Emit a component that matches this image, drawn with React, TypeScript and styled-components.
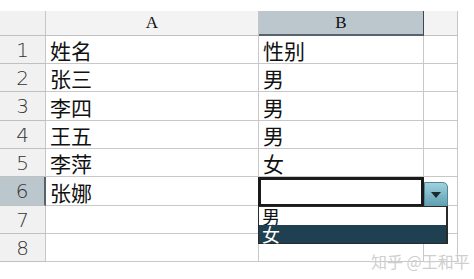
import React from "react";
import styled, {createGlobalStyle} from "styled-components";

const GlobalStyle = createGlobalStyle`
  html, body {
    margin: 0;
    padding: 0;
    background: #ffffff;
  }
  body {
    font-family: "Noto Sans CJK SC", "Noto Sans", sans-serif;
  }
`

const columns = [
    {name: "A", width: 213},
    {name: "B", width: 165},
    {name: "", width: 34},
]

const rows = [
    {n: 1, h: 28, a: "姓名", b: "性别"},
    {n: 2, h: 28, a: "张三", b: "男"},
    {n: 3, h: 29, a: "李四", b: "男"},
    {n: 4, h: 28, a: "王五", b: "男"},
    {n: 5, h: 28, a: "李萍", b: "女"},
    {n: 6, h: 29, a: "张娜", b: ""},
    {n: 7, h: 28, a: "", b: ""},
    {n: 8, h: 28, a: "", b: ""},
]

export default function App() {
    return (
        <Page>
            <GlobalStyle/>
            <Sheet>
                <HeaderRow>
                    <Corner/>
                    {columns.map(c => (
                        <ColHeader key={c.name + c.width} width={c.width} selected={c.name === "B"}>
                            {c.name}
                        </ColHeader>
                    ))}
                </HeaderRow>
                {rows.map(r => (
                    <Row key={r.n} height={r.h}>
                        <RowHeader selected={r.n === 6}>{r.n}</RowHeader>
                        <Cell width={213}>{r.a}</Cell>
                        <Cell width={165}>{r.b}</Cell>
                        <Cell width={34}/>
                    </Row>
                ))}
                <ActiveCell/>
                <DropButton>
                    <svg width="10" height="6" viewBox="0 0 10 6">
                        <path d="M0 0 H10 L5 6 Z" fill="#1d2a30"/>
                    </svg>
                </DropButton>
                <DropList>
                    <ListItem>男</ListItem>
                    <ListItem selected>女</ListItem>
                </DropList>
            </Sheet>
            <Watermark>知乎 @王和平</Watermark>
        </Page>
    );
}

const Page = styled.div`
  position: relative;
  width: 474px;
  height: 279px;
  padding-top: 11px;
  box-sizing: border-box;
  overflow: hidden;
  background: #fff;
`
const Sheet = styled.div`
  position: relative;
  display: flex;
  flex-direction: column;
  width: 458px;
`
const HeaderRow = styled.div`
  display: flex;
  height: 25px;
`
const Corner = styled.div`
  width: 46px;
  box-sizing: border-box;
  background: #f1f1f1;
  border-right: 1px solid #c6c6c6;
  border-bottom: 1px solid #c0c0c0;
`
const ColHeader = styled.div<{ width: number; selected?: boolean }>`
  width: ${p => p.width}px;
  box-sizing: border-box;
  display: flex;
  align-items: center;
  justify-content: center;
  font-family: "Liberation Serif", "DejaVu Serif", serif;
  font-size: 17px;
  color: #111;
  background: ${p => p.selected ? "#bcc6cd" : "#f3f3f3"};
  border-right: 1px solid ${p => p.selected ? "#3d4850" : "#c6c6c6"};
  border-bottom: ${p => p.selected ? "2px solid #56636c" : "1px solid #c0c0c0"};
`
const Row = styled.div<{ height: number }>`
  display: flex;
  height: ${p => p.height}px;
`
const RowHeader = styled.div<{ selected?: boolean }>`
  width: 46px;
  box-sizing: border-box;
  display: flex;
  align-items: center;
  justify-content: center;
  font-family: "DejaVu Sans", "Liberation Sans", sans-serif;
  font-size: 20px;
  font-weight: 300;
  color: #333;
  background: ${p => p.selected ? "#bcc6cd" : "#f1f1f1"};
  border-right: ${p => p.selected ? "2px solid #56636c" : "1px solid #c6c6c6"};
  border-bottom: 1px solid #c0c0c0;
`
const Cell = styled.div<{ width: number }>`
  width: ${p => p.width}px;
  box-sizing: border-box;
  display: flex;
  align-items: flex-end;
  padding: 0 0 0 4px;
  font-size: 21px;
  line-height: 26px;
  color: #111;
  border-right: 1px solid #c8c8c8;
  border-bottom: 1px solid #c8c8c8;
  overflow: hidden;
  white-space: nowrap;
`
const ActiveCell = styled.div`
  position: absolute;
  left: 258px;
  top: 166px;
  width: 166px;
  height: 30px;
  box-sizing: border-box;
  border: 3px solid #1a1a1a;
  background: #fff;
`
const DropButton = styled.div`
  position: absolute;
  left: 424px;
  top: 171px;
  width: 24px;
  height: 25px;
  box-sizing: border-box;
  display: flex;
  align-items: center;
  justify-content: center;
  border: 1px solid #4f8595;
  border-radius: 0 5px 0 0;
  background: linear-gradient(#9fd1de, #5f9fb1);
`
const DropList = styled.div`
  position: absolute;
  left: 258px;
  top: 195px;
  width: 190px;
  box-sizing: border-box;
  border: 1px solid #2a2a2a;
  border-right-width: 2px;
  background: #fff;
  display: flex;
  flex-direction: column;
`
const ListItem = styled.div<{ selected?: boolean }>`
  height: 18px;
  padding-left: 3px;
  display: flex;
  align-items: center;
  font-size: 18px;
  line-height: 18px;
  color: ${p => p.selected ? "#ffffff" : "#111"};
  background: ${p => p.selected ? "#1e4050" : "#fff"};
`
const Watermark = styled.div`
  position: absolute;
  left: 371px;
  top: 251px;
  font-size: 16px;
  line-height: 20px;
  color: #cfcfcf;
  white-space: nowrap;
`
